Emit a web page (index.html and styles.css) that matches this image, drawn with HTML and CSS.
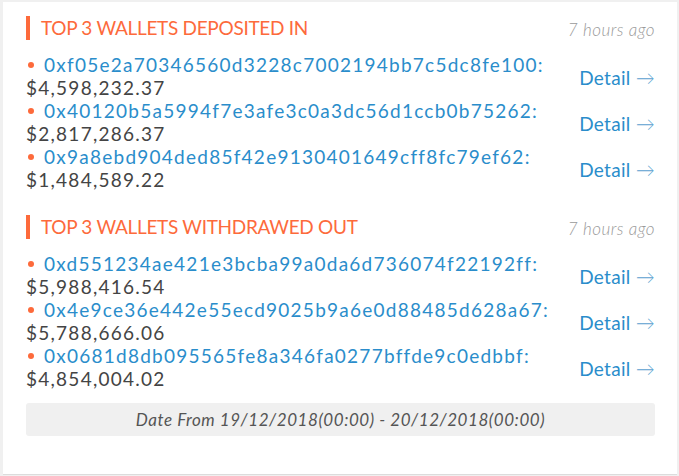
FILE: index.html
```html
<!DOCTYPE html>
<html lang="en">
<head>
<meta charset="utf-8">
<title>Top wallets</title>
<link rel="stylesheet" href="styles.css">
</head>
<body>
<div class="card">
  <section class="block">
    <div class="block-head">
      <h2 class="block-title">TOP 3 WALLETS DEPOSITED IN</h2>
      <span class="ago">7 hours ago</span>
    </div>
    <ul class="wallets">
      <li class="wallet">
        <div class="wallet-info">
          <div class="addr"><span class="dot"></span><a class="addr-link">0xf05e2a70346560d3228c7002194bb7c5dc8fe100:</a></div>
          <div class="amount">$4,598,232.37</div>
        </div>
        <a class="detail">Detail <span class="arrow">→</span></a>
      </li>
      <li class="wallet">
        <div class="wallet-info">
          <div class="addr"><span class="dot"></span><a class="addr-link">0x40120b5a5994f7e3afe3c0a3dc56d1ccb0b75262:</a></div>
          <div class="amount">$2,817,286.37</div>
        </div>
        <a class="detail">Detail <span class="arrow">→</span></a>
      </li>
      <li class="wallet">
        <div class="wallet-info">
          <div class="addr"><span class="dot"></span><a class="addr-link">0x9a8ebd904ded85f42e9130401649cff8fc79ef62:</a></div>
          <div class="amount">$1,484,589.22</div>
        </div>
        <a class="detail">Detail <span class="arrow">→</span></a>
      </li>
    </ul>
  </section>
  <section class="block block-second">
    <div class="block-head">
      <h2 class="block-title">TOP 3 WALLETS WITHDRAWED OUT</h2>
      <span class="ago">7 hours ago</span>
    </div>
    <ul class="wallets">
      <li class="wallet">
        <div class="wallet-info">
          <div class="addr"><span class="dot"></span><a class="addr-link">0xd551234ae421e3bcba99a0da6d736074f22192ff:</a></div>
          <div class="amount">$5,988,416.54</div>
        </div>
        <a class="detail">Detail <span class="arrow">→</span></a>
      </li>
      <li class="wallet">
        <div class="wallet-info">
          <div class="addr"><span class="dot"></span><a class="addr-link">0x4e9ce36e442e55ecd9025b9a6e0d88485d628a67:</a></div>
          <div class="amount">$5,788,666.06</div>
        </div>
        <a class="detail">Detail <span class="arrow">→</span></a>
      </li>
      <li class="wallet">
        <div class="wallet-info">
          <div class="addr"><span class="dot"></span><a class="addr-link">0x0681d8db095565fe8a346fa0277bffde9c0edbbf:</a></div>
          <div class="amount">$4,854,004.02</div>
        </div>
        <a class="detail">Detail <span class="arrow">→</span></a>
      </li>
    </ul>
  </section>
  <div class="range">Date From 19/12/2018(00:00) - 20/12/2018(00:00)</div>
</div>
</body>
</html>
```

FILE: styles.css
```css
html, body {
  margin: 0;
  padding: 0;
}
body {
  background: #f0f0f0;
  font-family: Lato, "Open Sans", sans-serif;
  color: #444;
  width: 679px;
  height: 476px;
  overflow: hidden;
}
.card {
  box-sizing: border-box;
  margin: 2px 2px 0 3px;
  height: 473px;
  background: #fff;
  border-bottom: 1px solid #dcdcdc;
  padding: 14px 22px 0 23px;
}
.block-head {
  display: flex;
  justify-content: space-between;
  align-items: center;
  height: 24px;
}
.block-title {
  margin: 0;
  font-weight: normal;
  font-size: 19px;
  line-height: 24px;
  color: #fd6a3b;
  border-left: 4px solid #fd6a3b;
  padding-left: 11px;
  letter-spacing: -0.3px;
}
.ago {
  font-style: italic;
  font-weight: 300;
  font-size: 17px;
  letter-spacing: 0.5px;
  color: #9a9a9a;
  padding-top: 2px;
}
.wallets {
  list-style: none;
  margin: 13px 0 0 0;
  padding: 0;
}
.wallet {
  display: flex;
  justify-content: space-between;
  align-items: center;
}
.wallet-info {
  font-size: 19px;
  line-height: 23px;
  letter-spacing: 1.25px;
}
.addr {
  display: flex;
  align-items: center;
  white-space: nowrap;
}
.dot {
  width: 6px;
  height: 6px;
  border-radius: 50%;
  background: #fd6a3b;
  margin: 0 10px 0 2px;
}
.addr-link {
  color: #2a8dcb;
}
.amount {
  color: #444;
}
.detail {
  color: #2a8dcb;
  font-size: 19px;
  line-height: 23px;
  padding-top: 2px;
  letter-spacing: 0.3px;
}
.arrow {
  color: #5a9fd0;
  font-weight: 300;
}
.block-second {
  margin-top: 24px;
}
.range {
  margin-top: 13px;
  height: 33px;
  line-height: 33px;
  background: #f0f0f0;
  border-radius: 3px;
  text-align: center;
  font-style: italic;
  font-size: 17px;
  letter-spacing: 0.55px;
  color: #555;
}
```
